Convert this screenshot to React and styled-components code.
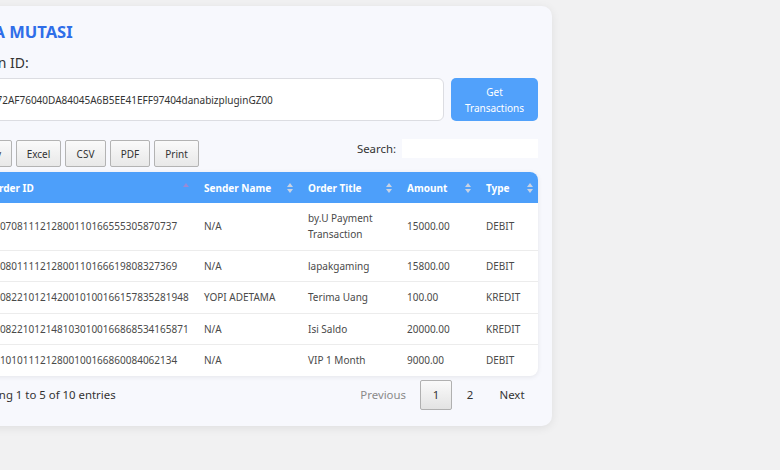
import React from "react";
import styled, { createGlobalStyle } from "styled-components";

const Global = createGlobalStyle`
  html, body { margin: 0; padding: 0; background: #f1f1f2; }
  body { font-family: "Noto Sans", "Open Sans", sans-serif; color: #333; overflow: hidden; }
  * { box-sizing: border-box; }
`;

const Page = styled.div`
  width: 780px;
  height: 470px;
  padding-top: 6px;
  overflow: hidden;
`;

const Card = styled.div`
  margin-left: -48px;
  width: 600px;
  background: #f7f8fd;
  border-radius: 10px;
  box-shadow: 0 2px 10px rgba(0, 0, 0, 0.08);
  padding: 16px 14px 16px 15px;
`;

const Title = styled.h1`
  margin: 0;
  font-size: 16.5px;
  line-height: 20px;
  font-weight: 700;
  color: #2f6ee9;
  text-indent: -10px;
`;

const Label = styled.label`
  display: block;
  margin-top: 12px;
  font-size: 14px;
  line-height: 18px;
  color: #333;
`;

const InputRow = styled.div`
  display: flex;
  gap: 7px;
  margin-top: 6px;
  height: 43px;
`;

const TextInput = styled.input`
  flex: 1;
  height: 43px;
  border: 1px solid #dcdde2;
  border-radius: 6px;
  background: #fff;
  padding: 0 4px;
  font-family: inherit;
  font-size: 10px;
  color: #333;
  outline: none;
`;

const PrimaryButton = styled.button`
  width: 87px;
  height: 43px;
  border: none;
  border-radius: 5px;
  background: #51a1fb;
  color: #fff;
  font-family: inherit;
  font-size: 10px;
  line-height: 16px;
  padding: 0 6px;
`;

const Toolbar = styled.div`
  display: flex;
  align-items: center;
  justify-content: space-between;
  margin-top: 19px;
  height: 27px;
`;

const ButtonGroup = styled.div`
  display: flex;
  gap: 4px;
`;

const ExportButton = styled.button`
  height: 27px;
  width: ${(p) => p.$w}px;
  padding: 0;
  border: 1px solid #b3b3b3;
  border-radius: 2px;
  background: linear-gradient(to bottom, #fafafa 0%, #e8e8e8 100%);
  color: #333;
  font-family: inherit;
  font-size: 10px;
`;

const SearchBox = styled.label`
  display: flex;
  align-items: center;
  gap: 6px;
  font-size: 11.4px;
  color: #333;
  margin-top: -11px;
`;

const SearchInput = styled.input`
  width: 136px;
  height: 19px;
  border: none;
  background: #fff;
  outline: none;
`;

const TableWrap = styled.div`
  margin-top: 5px;
  background: #fff;
  border-radius: 8px;
  overflow: hidden;
  box-shadow: 0 1px 5px rgba(0, 0, 0, 0.08);
`;

const Table = styled.table`
  width: 100%;
  table-layout: fixed;
  border-collapse: collapse;
  font-size: 10px;
  line-height: 16px;
`;

const Th = styled.th`
  position: relative;
  background: #4d9ffa;
  color: #fff;
  font-weight: 700;
  text-align: left;
  padding: 7.5px 10px 7.5px ${(p) => (p.$first ? 24 : 10)}px;
  white-space: nowrap;
`;

const SortIcon = styled.svg`
  position: absolute;
  right: 5px;
  top: 50%;
  transform: translateY(-50%);
`;

const Td = styled.td`
  padding: 7.25px 10px;
  color: #4a4a4a;
  white-space: ${(p) => (p.$wrap ? "normal" : "nowrap")};
  overflow: hidden;
`;

const Tr = styled.tr`
  & + & td { border-top: 1px solid #ececec; }
`;

const Footer = styled.div`
  display: flex;
  align-items: center;
  justify-content: space-between;
  margin-top: 4px;
  height: 30px;
`;

const Info = styled.div`
  font-size: 11.4px;
  color: #333;
`;

const Pager = styled.div`
  display: flex;
  align-items: center;
  font-size: 11.4px;
`;

const PageLink = styled.span`
  display: inline-flex;
  align-items: center;
  justify-content: center;
  height: 30px;
  min-width: ${(p) => (p.$w ? p.$w : 32)}px;
  color: ${(p) => (p.$disabled ? "#8a8a8a" : "#333")};
  border: 1px solid ${(p) => (p.$current ? "#b0b0b0" : "transparent")};
  border-radius: 2px;
  background: ${(p) => (p.$current ? "linear-gradient(to bottom, #fafafa 0%, #e3e3e3 100%)" : "transparent")};
  margin-left: ${(p) => p.$ml || 0}px;
`;

const Sort = ({ active }) =>
  active ? (
    <SortIcon width="6" height="12" viewBox="0 0 6 12">
      <path d="M0 5 L3 1 L6 5 Z" fill="#9a8ad6" />
    </SortIcon>
  ) : (
    <SortIcon width="6" height="12" viewBox="0 0 6 12">
      <path d="M0 5 L3 1 L6 5 Z" fill="#c9d3e3" />
      <path d="M0 7 L3 11 L6 7 Z" fill="#c9d3e3" />
    </SortIcon>
  );

const rows = [
  ["20220708111212800110166555305870737", "N/A", "by.U Payment Transaction", "15000.00", "DEBIT"],
  ["20220801111212800110166619808327369", "N/A", "lapakgaming", "15800.00", "DEBIT"],
  ["2022082210121420010100166157835281948", "YOPI ADETAMA", "Terima Uang", "100.00", "KREDIT"],
  ["2022082210121481030100166868534165871", "N/A", "Isi Saldo", "20000.00", "KREDIT"],
  ["20221010111212800100166860084062134", "N/A", "VIP 1 Month", "9000.00", "DEBIT"],
];

const headers = ["Order ID", "Sender Name", "Order Title", "Amount", "Type"];
const widths = [227, 104, 99, 79, 62];

export default function App() {
  return (
    <Page>
      <Global />
      <Card>
        <Title>DANA MUTASI</Title>
        <Label>Token ID:</Label>
        <InputRow>
          <TextInput readOnly value="GZ0072AF76040DA84045A6B5EE41EFF97404danabizpluginGZ00" />
          <PrimaryButton>Get Transactions</PrimaryButton>
        </InputRow>
        <Toolbar>
          <ButtonGroup>
            <ExportButton $w={45}>Copy</ExportButton>
            <ExportButton $w={45}>Excel</ExportButton>
            <ExportButton $w={41}>CSV</ExportButton>
            <ExportButton $w={40}>PDF</ExportButton>
            <ExportButton $w={45}>Print</ExportButton>
          </ButtonGroup>
          <SearchBox>
            Search:
            <SearchInput />
          </SearchBox>
        </Toolbar>
        <TableWrap>
          <Table>
            <colgroup>
              {widths.map((w, i) => (
                <col key={i} style={{ width: w }} />
              ))}
            </colgroup>
            <thead>
              <tr>
                {headers.map((h, i) => (
                  <Th key={h} $first={i === 0}>
                    {h}
                    <Sort active={i === 0} />
                  </Th>
                ))}
              </tr>
            </thead>
            <tbody>
              {rows.map((r) => (
                <Tr key={r[0]}>
                  {r.map((c, i) => (
                    <Td key={i} $wrap={i === 2}>
                      {c}
                    </Td>
                  ))}
                </Tr>
              ))}
            </tbody>
          </Table>
        </TableWrap>
        <Footer>
          <Info>Showing 1 to 5 of 10 entries</Info>
          <Pager>
            <PageLink $disabled $w={45}>Previous</PageLink>
            <PageLink $current $ml={13}>1</PageLink>
            <PageLink $ml={2}>2</PageLink>
            <PageLink $w={52}>Next</PageLink>
          </Pager>
        </Footer>
      </Card>
    </Page>
  );
}
